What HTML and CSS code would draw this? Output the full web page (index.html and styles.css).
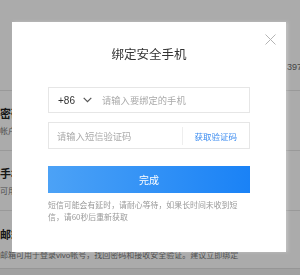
FILE: index.html
```html
<!DOCTYPE html>
<html lang="zh-CN">
<head>
  <meta charset="UTF-8" />
  <meta name="viewport" content="width=device-width, initial-scale=1" />
  <title>绑定安全手机</title>
  <link rel="stylesheet" href="styles.css">
</head>
<body>
<div class="page">
  <header class="top">
    <div class="logo">vivo</div>
    <div class="account">397-0086</div>
  </header>
  <section class="item">
    <div class="item-title">密码</div>
    <div class="item-desc">帐户安全建议定期修改密码</div>
  </section>
  <section class="item">
    <div class="item-title">手机</div>
    <div class="item-desc">可用手机号登录帐号</div>
  </section>
  <section class="item item-last">
    <div class="item-title">邮箱</div>
    <div class="item-desc">邮箱可用于登录vivo帐号，找回密码和接收安全验证。建议立即绑定</div>
  </section>
  <div class="foot"></div>
</div>

<!-- Modal -->
<div class="mask">
  <div class="dialog">
    <span class="close">
      <svg width="11" height="11" viewBox="0 0 11 11"><path d="M0.5 0.5L10.5 10.5M10.5 0.5L0.5 10.5" stroke="#b4b4b4" stroke-width="1" fill="none"/></svg>
    </span>
    <h3 class="dialog-title">绑定安全手机</h3>
    <div class="field">
      <span class="code">+86</span>
      <svg class="arrow" width="9" height="6" viewBox="0 0 9 6"><path d="M0.7 0.8L4.5 4.6L8.3 0.8" stroke="#555" stroke-width="1.2" fill="none"/></svg>
      <input class="input" type="text" placeholder="请输入要绑定的手机">
    </div>
    <div class="field field-sms">
      <input class="input" type="text" placeholder="请输入短信验证码">
      <span class="sep"></span>
      <a class="get-code" href="#">获取验证码</a>
    </div>
    <button class="submit-btn">完成</button>
    <p class="note">短信可能会有延时，请耐心等待，如果长时间未收到短信，请60秒后重新获取</p>
  </div>
</div>
</body>
</html>
```

FILE: styles.css
```css
* { box-sizing: border-box; }
body { margin:0; font-family:"Liberation Sans","Noto Sans CJK SC",sans-serif; background:#fff; color:#333; overflow:hidden; }
.page { width:300px; }
.top { display:flow-root; height:90px; }
.logo { margin-top:-36px; height:40px; line-height:40px; font-size:37px; font-weight:bold; color:#1f7fd9; text-align:center; padding-left:6px; }
.account { margin:58px 0 0 287px; font-size:9px; line-height:11px; color:#666; white-space:nowrap; }
.item { height:60px; border-top:1px solid #e4e4e4; padding-top:16px; white-space:nowrap; overflow:hidden; }
.item-last { height:58px; padding-top:17px; }
.item-last .item-desc { margin-top:9px; }
.item-title { font-size:11px; line-height:14px; font-weight:bold; color:#222; }
.item-desc { margin-top:6px; font-size:8px; line-height:10px; color:#777; }
.foot { height:20px; background:#f0f0f0; border-top:1px solid #e0e0e0; }

.mask { position:fixed; top:0; left:0; width:100%; height:100%; background:rgba(0,0,0,0.33); }
.dialog { position:relative; width:274px; height:230px; margin:22px 0 0 12px; background:#fff; padding:24px 36px 0; box-shadow:2px 0 3px rgba(255,255,255,0.25); }
.close { position:absolute; top:12px; right:10px; width:11px; height:11px; line-height:0; cursor:pointer; }
.dialog-title { margin:0; font-size:12.5px; line-height:16px; font-weight:normal; text-align:center; color:#333; font-family:"Noto Sans CJK SC",sans-serif; }
.field { display:flex; align-items:center; height:26px; margin-top:25px; border:1px solid #e6e6e6; padding:0 8px; }
.field-sms { height:27px; margin-top:9px; padding-right:12px; }
.code { font-size:10px; color:#333; padding-left:1px; width:26px; }
.arrow { margin-right:10px; }
.input { flex:1; min-width:0; border:none; outline:none; padding:0; font-size:9.3px; color:#333; font-family:"Noto Sans CJK SC",sans-serif; background:transparent; }
.input::placeholder { color:#aaa; }
.sep { width:1px; height:18px; background:#eee; margin-right:11px; }
.get-code { font-size:8.5px; color:#3b8cf0; text-decoration:none; font-family:"Noto Sans CJK SC",sans-serif; }
.submit-btn { display:block; width:100%; height:27px; margin-top:17px; border:none; background:linear-gradient(90deg,#4ca2f6,#1a82f6); color:#fff; font-size:10px; font-family:"Noto Sans CJK SC",sans-serif; cursor:pointer; }
.note { margin:6px 0 0; padding-right:8px; font-size:7.9px; line-height:12px; color:#999; font-family:"Noto Sans CJK SC",sans-serif; }
```
